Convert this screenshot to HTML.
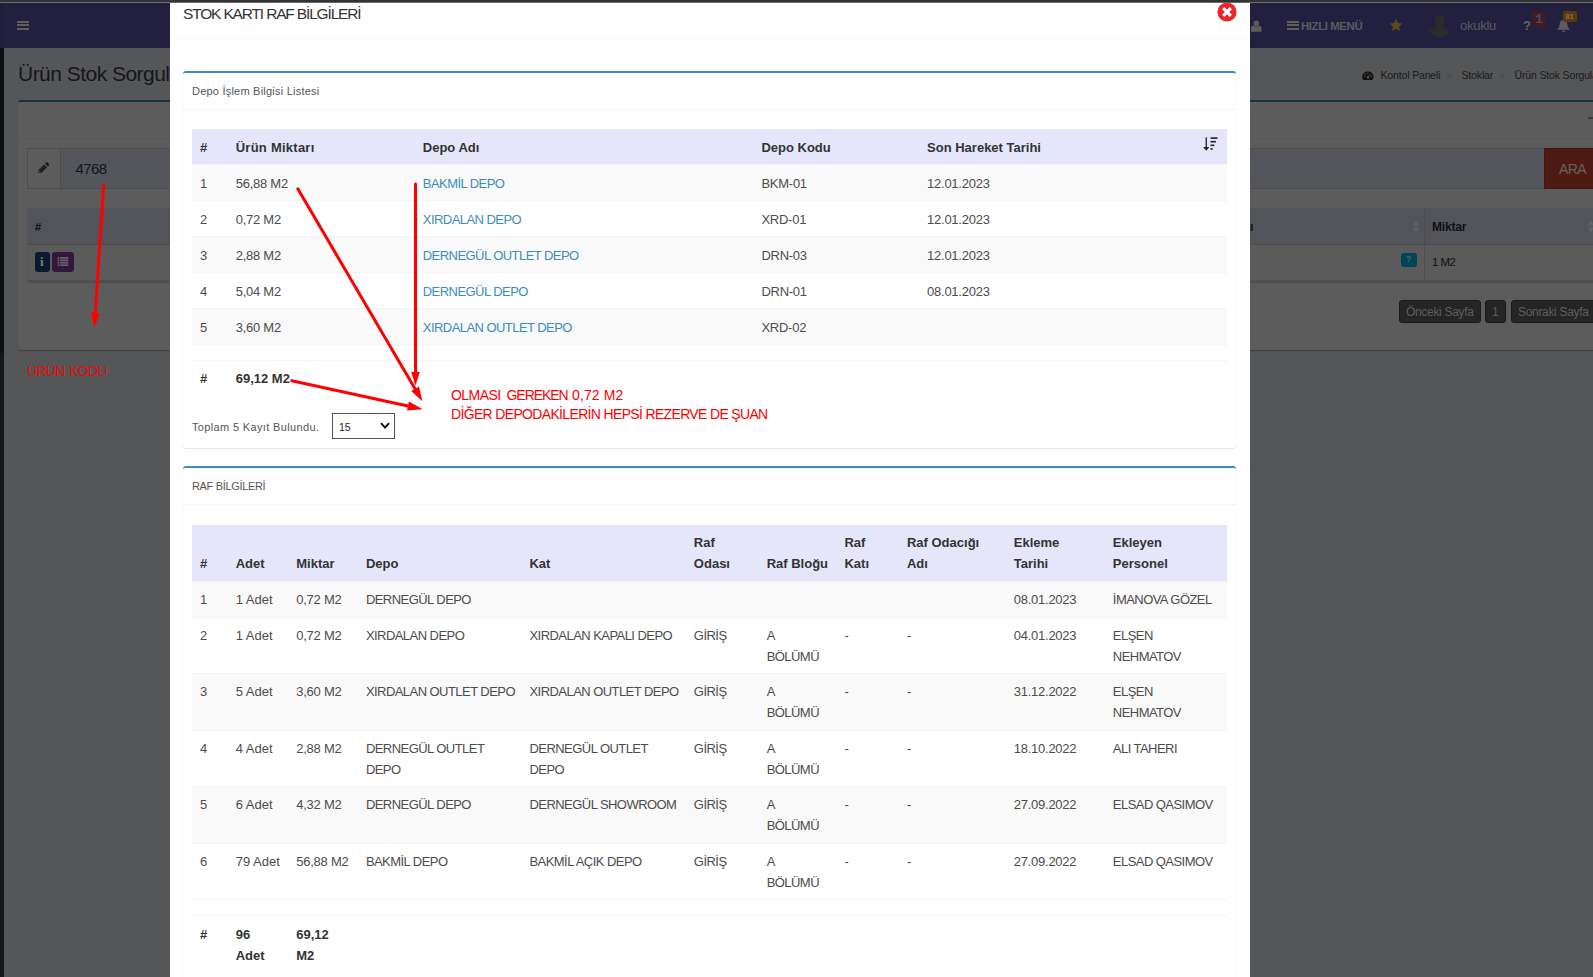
<!DOCTYPE html>
<html lang="tr">
<head>
<meta charset="utf-8">
<title>Ürün Stok Sorgula</title>
<style>
*{box-sizing:border-box}
html,body{margin:0;padding:0;overflow:hidden}
body{width:1593px;height:977px;overflow:hidden;position:relative;background:#555658;font-family:"Liberation Sans",sans-serif;font-size:13px;color:#444;line-height:20px}
.abs{position:absolute}
/* ---------- dimmed background page ---------- */
#topbar{left:0;top:0;width:1593px;height:2px;background:#333}
#topline{left:0;top:2px;width:1593px;height:1px;background:#6e6e6e}
#hdr{left:0;top:3px;width:1593px;height:45px;background:#23203f}
#hdrL{left:0;top:3px;width:4px;height:45px;background:#1f1d38}
#side{left:0;top:48px;width:4px;height:929px;background:#0c1012}
#side2{left:0;top:353px;width:4px;height:624px;background:#11171a}
.hb{left:17px;width:12px;height:2px;background:#5f5f5c}
.htxt{color:#585b61;white-space:nowrap}
#ptitle{left:18px;top:60px;font-size:21px;line-height:28px;color:#15151d;white-space:nowrap;letter-spacing:-0.53px}
#bbox{left:18px;top:100px;width:1600px;height:250px;background:#5c5c5c;border-top:2px solid #163344;border-radius:3px;box-shadow:0 1px 1px rgba(0,0,0,.25)}
#bboxh{left:18px;top:138px;width:1600px;height:1px;background:#585858}
#addon{left:27px;top:148px;width:34px;height:41px;background:#5c5c5c;border:1px solid #4c4d50}
#inp{left:60px;top:148px;width:1485px;height:41px;background:#54565b;border:1px solid #4c4d50}
#inptxt{left:75.5px;top:157px;font-size:15px;line-height:24px;color:#15151a;letter-spacing:-0.58px}
#ara{left:1544px;top:148px;width:80px;height:41px;background:#4e1b14;border:1px solid #4a120c}
#aratxt{left:1559px;top:157px;font-size:14px;line-height:24px;color:#6a6060;letter-spacing:-0.6px}
#bth{left:27px;top:208px;width:1600px;height:37px;background:#53535a;border-bottom:1px solid #4c4c4c;border-top-left-radius:3px}
#btr{left:27px;top:245px;width:1600px;height:37px;background:#5b5b5b;border-bottom:2px solid #505050;border-left:1px solid #575757;border-bottom-left-radius:4px;box-shadow:0 1px 1px rgba(0,0,0,.15)}
.bcol{width:1px;background:#4c4d50}
.bth{font-weight:bold;font-size:12px;color:#101015;line-height:16px}
.btn{border-radius:3px}
.pg{top:300px;height:23px;background:#252525;border:1px solid #1a1a1a;border-radius:3px;color:#5e5e5e;font-size:12px;line-height:22.5px;white-space:nowrap;padding-left:6px;letter-spacing:-0.32px}
/* ---------- modal ---------- */
#modal{left:170px;top:3px;width:1080px;height:980px;background:#fff}
#mtitle{left:183px;top:2px;font-size:15.5px;line-height:24px;color:#333;white-space:nowrap;letter-spacing:-1.16px}
#mline{left:171px;top:38px;width:1078px;height:1px;background:#f4f4f4}
.box{left:183px;width:1053px;background:#fff;border-top:2px solid #3c8dbc;border-radius:3px;box-shadow:0 1px 1px rgba(0,0,0,.1), 0 0 1px rgba(0,0,0,.08)}
.boxt{left:192px;font-size:11px;line-height:18px;color:#555;white-space:nowrap;letter-spacing:0px}
.boxl{left:183px;width:1053px;height:1px;background:#f4f4f4}
table{position:absolute;left:192px;width:1035px;border-collapse:separate;border-spacing:0;table-layout:fixed}
td,th{padding:9px 8px 6px 8px;text-align:left;vertical-align:top;border-top:1px solid #f4f4f4;font-size:13px;line-height:20px;color:#4c4c4c;overflow:hidden;font-weight:normal}
th{background:#e6e6fa;color:#333;font-weight:bold;border-top:0;vertical-align:bottom;padding:9px 8px 6px 8px}
#t2 td{padding:8px 8px 6px 8px;line-height:20px}
#t2 tr.two td{line-height:20.5px}
#t2 tr.f td{line-height:21px}
#t2 th{padding:7px 8px 7px 8px;line-height:21px}
tr.o td{background:#f9f9f9}
tr.f td{font-weight:bold;color:#333;padding-top:8px}
a{color:#3c8dbc;text-decoration:none}
.u{letter-spacing:-0.55px}
.n{letter-spacing:-0.25px}
.red{color:#f00;white-space:nowrap;font-size:14px;line-height:19px}
</style>
</head>
<body>
<!-- background page (already dimmed colours) -->
<div id="hdr" class="abs"></div><div id="hdrL" class="abs"></div>
<div id="side" class="abs"></div><div id="side2" class="abs"></div>
<div class="abs hb" style="top:21px"></div><div class="abs hb" style="top:24px"></div><div class="abs hb" style="top:28px"></div>

<div id="ptitle" class="abs">Ürün Stok Sorgula</div>
<div id="bbox" class="abs"></div><div id="bboxh" class="abs"></div>
<div id="addon" class="abs"></div><div id="inp" class="abs"></div>
<svg class="abs" style="left:37.8px;top:162px" width="11.6" height="11.2" viewBox="0 0 12 12"><path d="M6.4 2.6 L9.4 5.6 L3.6 11.4 L0 12 L0.6 8.4 Z" fill="#181818"/><path d="M7.3 1.7 L8.9 0.1 Q9.3 -0.2 9.7 0.2 L11.8 2.3 Q12.2 2.7 11.9 3.1 L10.3 4.7 Z" fill="#1c1c1c"/><path d="M1.2 9.1 L2.9 10.8 L0.7 11.3 Z" fill="#5c5c5c"/><path d="M2.4 8.4 L7.4 3.4 M3.4 9.4 L8.4 4.4" stroke="#3c3c3c" stroke-width=".4"/></svg>
<div id="inptxt" class="abs">4768</div>
<div id="ara" class="abs"></div><div id="aratxt" class="abs">ARA</div>
<div id="bth" class="abs"></div><div id="btr" class="abs"></div>
<div class="abs bth" style="left:35px;top:219px;font-size:11px">#</div>
<div class="abs btn" style="left:35px;top:252px;width:15px;height:20px;background:#0a1a2e"></div>
<div class="abs" style="left:40px;top:254px;font:bold 13px/16px 'Liberation Serif',serif;color:#747a80">i</div>
<div class="abs btn" style="left:52px;top:252px;width:22px;height:20px;background:#33183e"></div>
<svg class="abs" style="left:57.3px;top:257px" width="11.8" height="9" viewBox="0 0 12 10"><g fill="#655e69"><rect x="0" y="0" width="12" height="2"/><rect x="0" y="2.7" width="12" height="2"/><rect x="0" y="5.4" width="12" height="2"/><rect x="0" y="8.1" width="12" height="1.9"/></g><rect x="2" y="0" width="0.8" height="10" fill="#33183e"/></svg>
<div class="abs bcol" style="left:1424px;top:208px;height:73px"></div>
<div class="abs bth" style="left:1250px;top:219px">ı</div>
<div class="abs bth" style="left:1432px;top:219px;letter-spacing:-0.2px">Miktar</div>
<svg class="abs" style="left:1412px;top:220px" width="8" height="13" viewBox="0 0 8 13"><path d="M4 0 L7.5 5.5 H0.5 Z M4 13 L7.5 7.5 H0.5 Z" fill="#5f6067"/></svg>
<svg class="abs" style="left:1587px;top:220px" width="8" height="13" viewBox="0 0 8 13"><path d="M4 0 L7.5 5.5 H0.5 Z M4 13 L7.5 7.5 H0.5 Z" fill="#5f6067"/></svg>
<div class="abs btn" style="left:1401px;top:253px;width:16px;height:14px;background:#004556"></div>
<div class="abs" style="left:1406px;top:253px;font-weight:bold;font-size:8.5px;line-height:12px;color:#4d6b72">?</div>
<div class="abs" style="left:1432px;top:252px;font-size:11.5px;line-height:20px;color:#111;letter-spacing:-0.55px">1 M2</div>
<div class="abs pg" style="left:1399px;width:82px">Önceki Sayfa</div>
<div class="abs pg" style="left:1485px;width:21px">1</div>
<div class="abs pg" style="left:1511px;width:90px">Sonraki Sayfa</div>
<div class="abs" style="left:1588px;top:116.5px;width:8px;height:2px;background:#3a3e43"></div>

<!-- header right -->
<svg class="abs" style="left:1251px;top:19.5px" width="10.5" height="12" viewBox="0 0 12 13"><circle cx="6" cy="3.4" r="3.2" fill="#5c5c5c"/><path d="M0 13 V9.5 Q0 6.2 3 6 Q6 8 9 6 Q12 6.2 12 9.5 V13 Z" fill="#5c5c5c"/></svg>
<div class="abs" style="left:1287px;top:20.5px;width:12px;height:2px;background:#5f5f5c"></div>
<div class="abs" style="left:1287px;top:24px;width:12px;height:2px;background:#5f5f5c"></div>
<div class="abs" style="left:1287px;top:28px;width:12px;height:2px;background:#5f5f5c"></div>
<div class="abs htxt" style="left:1301px;top:16px;font-size:11.5px;font-weight:bold;letter-spacing:-0.45px">HIZLI MENÜ</div>
<svg class="abs" style="left:1389px;top:18px" width="14" height="14" viewBox="0 0 14 14"><path d="M7 0.8 L8.9 4.9 L13.4 5.4 L10.1 8.5 L11 13 L7 10.8 L3 13 L3.9 8.5 L0.6 5.4 L5.1 4.9 Z" fill="#5a4a20"/></svg>
<svg class="abs" style="left:1428px;top:14px" width="23" height="23" viewBox="0 0 23 23"><defs><clipPath id="cp"><circle cx="11.5" cy="11.5" r="11.5"/></clipPath></defs><g clip-path="url(#cp)" fill="#2b2b2b"><ellipse cx="11.5" cy="7" rx="4.8" ry="6.2"/><path d="M0 23 V18 Q2 15.5 8 14 L9 12 H14 L15 14 Q21 15.5 23 18 V23 Z"/></g></svg>
<div class="abs htxt" style="left:1460px;top:16px;font-size:13px;letter-spacing:-0.25px">okuklu</div>
<div class="abs htxt" style="left:1523px;top:16px;font-size:13px;font-weight:bold;color:#66645f">?</div>
<div class="abs" style="left:1532px;top:11px;width:13px;height:17px;background:#3e1c26;border-radius:3px"></div>
<div class="abs" style="left:1534.9px;top:10.4px;font:bold 13.5px/20px 'Liberation Mono',monospace;color:#4c485c">1</div>
<svg class="abs" style="left:1557px;top:19px" width="13" height="13" viewBox="0 0 13 13"><path d="M6.5 0 Q7.3 0 7.3 0.9 Q10.4 1.8 10.4 5.5 Q10.4 8.8 12.6 10.2 V10.8 H0.4 V10.2 Q2.6 8.8 2.6 5.5 Q2.6 1.8 5.7 0.9 Q5.7 0 6.5 0 Z M5 11.5 H8 Q8 13 6.5 13 Q5 13 5 11.5 Z" fill="#5c5c5c"/></svg>
<div class="abs" style="left:1563px;top:11px;width:14px;height:11px;background:#5c3a06;border-radius:2px"></div>
<div class="abs" style="left:1565.5px;top:10.5px;font-size:7.5px;line-height:12px;font-weight:bold;color:#76746a;letter-spacing:.1px">81</div>
<!-- breadcrumb -->
<svg class="abs" style="left:1362.4px;top:70.6px" width="11.8" height="9.6" viewBox="0 0 12 11" preserveAspectRatio="none"><path d="M6 0.5 A5.8 5.8 0 0 0 0.2 6.3 Q0.2 8.6 1.5 10.3 H10.5 Q11.8 8.6 11.8 6.3 A5.8 5.8 0 0 0 6 0.5 Z" fill="#101010"/><circle cx="6" cy="7.4" r="1.3" fill="#555658"/><path d="M6 7.4 L8.6 3.6" stroke="#555658" stroke-width="1"/><circle cx="2.6" cy="6" r=".8" fill="#555658"/><circle cx="3.6" cy="3.6" r=".8" fill="#555658"/><circle cx="6" cy="2.6" r=".8" fill="#555658"/><circle cx="9.5" cy="6" r=".8" fill="#555658"/></svg>
<div class="abs" style="left:1380px;top:66px;font-size:10.5px;line-height:18px;color:#1a1a1a;white-space:nowrap;letter-spacing:-0.15px;margin-left:.5px">Kontol Paneli</div>
<div class="abs" style="left:1446px;top:66px;font-size:11px;line-height:18px;color:#48494b">&gt;</div>
<div class="abs" style="left:1461px;top:66px;font-size:10.5px;line-height:18px;color:#1a1a1a;white-space:nowrap;letter-spacing:-0.15px;margin-left:.5px">Stoklar</div>
<div class="abs" style="left:1499px;top:66px;font-size:11px;line-height:18px;color:#48494b">&gt;</div>
<div class="abs" style="left:1514px;top:66px;font-size:10.5px;line-height:18px;color:#1a1a1a;white-space:nowrap;letter-spacing:-0.15px;margin-left:.5px">Ürün Stok Sorgula</div>

<!-- modal -->
<div id="modal" class="abs"></div>
<div id="topbar" class="abs"></div>
<div class="abs" style="left:0;top:2px;width:170px;height:1px;background:#6e6e6e"></div>
<div class="abs" style="left:1250px;top:2px;width:343px;height:1px;background:#6e6e6e"></div>
<div class="abs" style="left:170px;top:2px;width:1080px;height:1px;background:#6a6a6a"></div>
<div id="mtitle" class="abs">STOK KARTI RAF BİLGİLERİ</div>
<div id="mline" class="abs"></div>
<svg class="abs" style="left:1217px;top:2px" width="20" height="20" viewBox="0 0 20 20"><circle cx="10" cy="10" r="9.6" fill="#eb272d"/><path d="M6.2 6.2 L13.8 13.8 M13.8 6.2 L6.2 13.8" stroke="#fff" stroke-width="3.2"/></svg>

<!-- box 1 -->
<div class="abs box" style="top:71px;height:377px"></div>
<div class="abs boxt" style="top:82px;letter-spacing:0.22px">Depo İşlem Bilgisi Listesi</div>
<div class="abs boxl" style="top:109px"></div>
<table style="top:129px">
<colgroup><col style="width:35.7px"><col style="width:187.1px"><col style="width:338.6px"><col style="width:165.7px"><col style="width:276.9px"><col style="width:31px"></colgroup>
<tr style="height:35px"><th>#</th><th style="letter-spacing:.25px">Ürün Miktarı</th><th>Depo Adı</th><th>Depo Kodu</th><th>Son Hareket Tarihi</th><th></th></tr>
<tr class="o" style="height:36px"><td>1</td><td class="n">56,88 M2</td><td class="u"><a>BAKMİL DEPO</a></td><td class="n">BKM-01</td><td class="n">12.01.2023</td><td></td></tr>
<tr style="height:36px"><td>2</td><td class="n">0,72 M2</td><td class="u"><a>XIRDALAN DEPO</a></td><td class="n">XRD-01</td><td class="n">12.01.2023</td><td></td></tr>
<tr class="o" style="height:36px"><td>3</td><td class="n">2,88 M2</td><td class="u"><a>DERNEGÜL OUTLET DEPO</a></td><td class="n">DRN-03</td><td class="n">12.01.2023</td><td></td></tr>
<tr style="height:36px"><td>4</td><td class="n">5,04 M2</td><td class="u"><a>DERNEGÜL DEPO</a></td><td class="n">DRN-01</td><td class="n">08.01.2023</td><td></td></tr>
<tr class="o" style="height:36px"><td>5</td><td class="n">3,60 M2</td><td class="u"><a>XIRDALAN OUTLET DEPO</a></td><td class="n">XRD-02</td><td></td><td></td></tr>
<tr style="height:16px"><td colspan="6" style="padding:0"></td></tr>
<tr class="f" style="height:37px"><td>#</td><td>69,12 M2</td><td></td><td></td><td></td><td></td></tr>
</table>
<svg class="abs" style="left:1203px;top:137px" width="15" height="14" viewBox="0 0 15 14"><g fill="#222"><rect x="2.6" y="0.3" width="1.3" height="11"/><path d="M0.2 10 H6.3 L3.25 13.8 Z"/><rect x="7.5" y="0.3" width="7" height="1.6"/><rect x="7.5" y="3.9" width="5.4" height="1.6"/><rect x="7.5" y="7.5" width="3.8" height="1.6"/><rect x="7.5" y="11.1" width="2.2" height="1.6"/></g></svg>
<div class="abs boxt" style="top:418px;letter-spacing:0.35px">Toplam 5 Kayıt Bulundu.</div>
<div class="abs" style="left:332px;top:413px;width:63px;height:26px;border:1px solid #555;background:#fff"></div>
<div class="abs" style="left:339px;top:418px;font-size:10.5px;line-height:18px;color:#222">15</div>
<svg class="abs" style="left:380px;top:422px" width="10" height="8" viewBox="0 0 10 8"><path d="M1 1.2 L5 5.6 L9 1.2" stroke="#111" stroke-width="2" fill="none"/></svg>

<!-- box 2 -->
<div class="abs box" style="top:466px;height:600px"></div>
<div class="abs boxt" style="top:477px;letter-spacing:-0.33px">RAF BİLGİLERİ</div>
<div class="abs boxl" style="top:504px"></div>
<table id="t2" style="top:525px">
<colgroup><col style="width:35.7px"><col style="width:60.6px"><col style="width:69.6px"><col style="width:163.6px"><col style="width:164.4px"><col style="width:72.8px"><col style="width:77.8px"><col style="width:62.5px"><col style="width:106.8px"><col style="width:99.1px"><col style="width:122.1px"></colgroup>
<tr style="height:56px"><th>#</th><th>Adet</th><th>Miktar</th><th>Depo</th><th>Kat</th><th>Raf Odası</th><th style="white-space:nowrap">Raf Bloğu</th><th>Raf Katı</th><th>Raf Odacığı Adı</th><th>Ekleme Tarihi</th><th>Ekleyen Personel</th></tr>
<tr class="o" style="height:36px"><td>1</td><td>1 Adet</td><td class="n">0,72 M2</td><td class="u">DERNEGÜL DEPO</td><td></td><td></td><td></td><td></td><td></td><td class="n">08.01.2023</td><td class="u" style="white-space:nowrap">İMANOVA GÖZEL</td></tr>
<tr class="two" style="height:56px"><td>2</td><td>1 Adet</td><td class="n">0,72 M2</td><td class="u">XIRDALAN DEPO</td><td class="u" style="white-space:nowrap">XIRDALAN KAPALI DEPO</td><td class="u">GİRİŞ</td><td class="u">A BÖLÜMÜ</td><td>-</td><td>-</td><td class="n">04.01.2023</td><td class="u">ELŞEN NEHMATOV</td></tr>
<tr class="o two" style="height:57px"><td>3</td><td>5 Adet</td><td class="n">3,60 M2</td><td class="u" style="white-space:nowrap">XIRDALAN OUTLET DEPO</td><td class="u" style="white-space:nowrap">XIRDALAN OUTLET DEPO</td><td class="u">GİRİŞ</td><td class="u">A BÖLÜMÜ</td><td>-</td><td>-</td><td class="n">31.12.2022</td><td class="u">ELŞEN NEHMATOV</td></tr>
<tr class="two" style="height:56px"><td>4</td><td>4 Adet</td><td class="n">2,88 M2</td><td class="u">DERNEGÜL OUTLET<br>DEPO</td><td class="u">DERNEGÜL OUTLET<br>DEPO</td><td class="u">GİRİŞ</td><td class="u">A BÖLÜMÜ</td><td>-</td><td>-</td><td class="n">18.10.2022</td><td class="u">ALI TAHERI</td></tr>
<tr class="o two" style="height:57px"><td>5</td><td>6 Adet</td><td class="n">4,32 M2</td><td class="u">DERNEGÜL DEPO</td><td class="u" style="white-space:nowrap">DERNEGÜL SHOWROOM</td><td class="u">GİRİŞ</td><td class="u">A BÖLÜMÜ</td><td>-</td><td>-</td><td class="n">27.09.2022</td><td class="u" style="white-space:nowrap">ELSAD QASIMOV</td></tr>
<tr class="two" style="height:56px"><td>6</td><td style="white-space:nowrap">79 Adet</td><td class="n" style="white-space:nowrap">56,88 M2</td><td class="u">BAKMİL DEPO</td><td class="u">BAKMİL AÇIK DEPO</td><td class="u">GİRİŞ</td><td class="u">A BÖLÜMÜ</td><td>-</td><td>-</td><td class="n">27.09.2022</td><td class="u" style="white-space:nowrap">ELSAD QASIMOV</td></tr>
<tr style="height:16px"><td colspan="11" style="padding:0"></td></tr>
<tr class="f" style="height:58px"><td>#</td><td>96 Adet</td><td>69,12 M2</td><td colspan="8"></td></tr>
</table>

<!-- red annotations (drawn over everything) -->
<svg class="abs" style="left:0;top:0" width="1593" height="977" viewBox="0 0 1593 977">
<g stroke="#f00" stroke-width="3" stroke-linecap="round" fill="none">
<line x1="103.7" y1="184.5" x2="95.3" y2="313"/>
<line x1="297.8" y1="188.8" x2="415" y2="388.7"/>
<line x1="415.5" y1="184" x2="415.5" y2="373"/>
<line x1="291.8" y1="380.8" x2="408" y2="406"/>
</g>
<g fill="#f00">
<polygon points="90.8,312.6 99.8,313.2 94.4,327.2"/>
<polygon points="411.2,372 419.8,372 415.5,385.6"/>
<polygon points="411.2,391 418.95,386.4 422.4,401.3"/>
<polygon points="408.9,401.5 407,410.4 422.7,409.2"/>
</g>
</svg>
<div class="abs red" style="left:27px;top:362px;letter-spacing:-0.72px;word-spacing:1.5px;opacity:.85">ÜRÜN KODU</div>
<div class="abs red" style="left:451px;top:386px;letter-spacing:-0.53px">OLMASI</div><div class="abs red" style="left:506.5px;top:386px;letter-spacing:-1.05px">GEREKEN</div><div class="abs red" style="left:572px;top:386px;letter-spacing:0.1px">0,72 M2</div>
<div class="abs red" style="left:451px;top:405px;letter-spacing:-0.66px">DİĞER DEPODAKİLERİN HEPSİ REZERVE DE ŞUAN</div>
</body>
</html>
